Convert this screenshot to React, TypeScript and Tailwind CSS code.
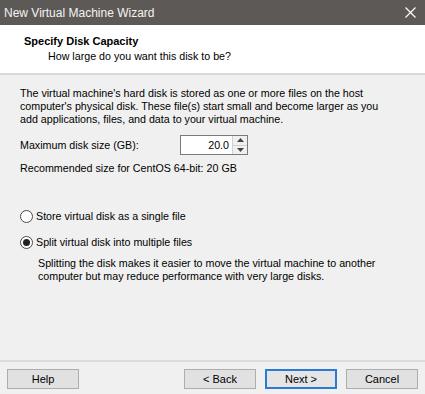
const FONT = "font-['Liberation_Sans',Arial,sans-serif]";

function Radio({ checked, label }: { checked: boolean; label: string }) {
  return (
    <div className="flex items-center gap-[3px]">
      <span className="flex h-[13px] w-[13px] items-center justify-center rounded-full border border-[#4a4a4a] bg-white">
        {checked && <span className="h-[7px] w-[7px] rounded-full bg-[#222]" />}
      </span>
      <span>{label}</span>
    </div>
  );
}

function WizButton({ label, primary }: { label: string; primary?: boolean }) {
  return (
    <button
      type="button"
      className={
        primary
          ? 'h-[20px] w-[72px] border-2 border-[#2a7ad6] bg-[#e5e5e5] text-[11px] text-black'
          : 'h-[20px] w-[72px] border border-[#adadad] bg-[#e1e1e1] text-[11px] text-black'
      }
    >
      {label}
    </button>
  );
}

export default function App() {
  return (
    <div className={`flex h-[394px] w-[425px] flex-col bg-[#f0f0f0] text-[10.7px] text-black ${FONT}`}>
      <div className="flex h-[25px] items-center justify-between bg-[#5d5956] pl-[4px] pr-[9px] text-[12px] text-[#f4f4f4]">
        <span>New Virtual Machine Wizard</span>
        <svg width="11" height="11" viewBox="0 0 11 11" className="text-white">
          <path d="M0.5 0.5 L10.5 10.5 M10.5 0.5 L0.5 10.5" stroke="currentColor" strokeWidth="1.2" />
        </svg>
      </div>

      <div className="flex h-[50px] flex-col border-b-2 border-[#d9d9d9] bg-white pl-[24px] pt-[9px]">
        <p className="text-[11px] font-bold leading-[14px]">Specify Disk Capacity</p>
        <p className="pl-[24px] leading-[16px]">How large do you want this disk to be?</p>
      </div>

      <div className="flex flex-1 flex-col px-[20px] pt-[12px]">
        <p className="leading-[13px]">
          The virtual machine's hard disk is stored as one or more files on the host
          <br />
          computer's physical disk. These file(s) start small and become larger as you
          <br />
          add applications, files, and data to your virtual machine.
        </p>

        <div className="mt-[9px] flex items-center">
          <span className="w-[160px]">Maximum disk size (GB):</span>
          <div className="flex h-[20px] border border-[#7a7a7a] bg-white">
            <span className="flex w-[51px] items-center justify-end pr-[3px]">20.0</span>
            <div className="flex w-[15px] flex-col border-l border-[#d0d0d0] bg-[#f0f0f0]">
              <span className="flex flex-1 items-center justify-center border-b border-[#d0d0d0]">
                <svg width="7" height="4" viewBox="0 0 7 4"><path d="M0 4 L3.5 0 L7 4 Z" fill="#444" /></svg>
              </span>
              <span className="flex flex-1 items-center justify-center">
                <svg width="7" height="4" viewBox="0 0 7 4"><path d="M0 0 L3.5 4 L7 0 Z" fill="#444" /></svg>
              </span>
            </div>
          </div>
        </div>

        <p className="mt-[7px] leading-[13px]">Recommended size for CentOS 64-bit: 20 GB</p>

        <div className="mt-[33px] flex flex-col gap-[10px]">
          <Radio checked={false} label="Store virtual disk as a single file" />
          <Radio checked label="Split virtual disk into multiple files" />
        </div>

        <p className="mt-[7px] pl-[18px] leading-[13px]">
          Splitting the disk makes it easier to move the virtual machine to another
          <br />
          computer but may reduce performance with very large disks.
        </p>
      </div>

      <div className="flex h-[34px] items-start border-t-2 border-[#dcdcdc] px-[7px] pt-[7px]">
        <WizButton label="Help" />
        <div className="ml-auto flex gap-[9px]">
          <WizButton label="< Back" />
          <WizButton label="Next >" primary />
          <WizButton label="Cancel" />
        </div>
      </div>
    </div>
  );
}
